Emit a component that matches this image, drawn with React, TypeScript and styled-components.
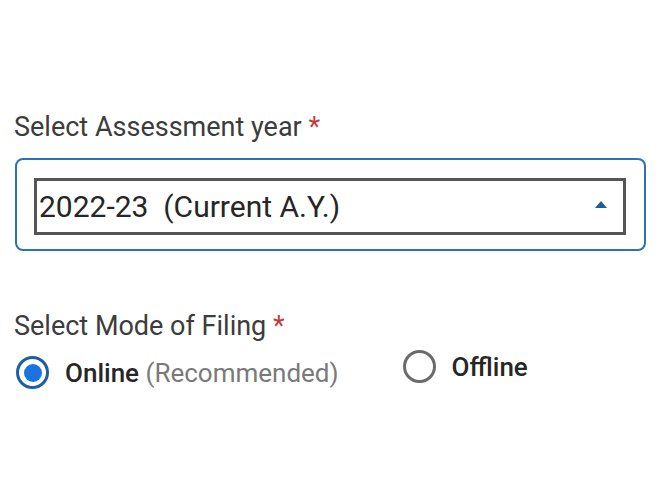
import React from "react";
import styled, { createGlobalStyle } from "styled-components";

const Global = createGlobalStyle`
  html, body { margin: 0; padding: 0; background: #ffffff; }
  body { font-family: Roboto, "Noto Sans", Arial, sans-serif; }
`;

const Page = styled.div`
  width: 660px;
  height: 495px;
  box-sizing: border-box;
  padding: 110px 14px 0 14px;
  display: flex;
  flex-direction: column;
`;

const Label = styled.div<{ $mt?: number }>`
  font-size: 27px;
  line-height: 34px;
  color: #3c3c3c;
  margin-top: ${(p) => p.$mt ?? 0}px;
  padding-left: 0;
`;

const Req = styled.span`
  color: #c6373e;
`;

const Outer = styled.div`
  margin-top: 14px;
  margin-left: 1px;
  width: 631px;
  height: 93px;
  box-sizing: border-box;
  border: 2px solid #2b73b8;
  border-radius: 8px;
  padding: 18px 18px 0 17px;
`;

const Inner = styled.div`
  height: 57px;
  box-sizing: border-box;
  border: 3px solid #555555;
  display: flex;
  align-items: center;
  justify-content: space-between;
  padding: 0 16px 0 2px;
`;

const Value = styled.span`
  font-size: 30px;
  color: #262626;
  white-space: pre;
`;

const Caret = styled.span`
  width: 0;
  height: 0;
  border-left: 6px solid transparent;
  border-right: 6px solid transparent;
  border-bottom: 7px solid #1f5c9c;
  margin-bottom: 4px;
`;

const Options = styled.div`
  display: flex;
  align-items: center;
  margin-top: 13px;
`;

const Option = styled.label<{ $ml?: number; $dy?: number }>`
  display: flex;
  align-items: center;
  gap: 16px;
  margin-left: ${(p) => p.$ml ?? 0}px;
  position: relative;
  top: ${(p) => p.$dy ?? 0}px;
`;

const Radio = styled.span<{ $on?: boolean }>`
  width: 33px;
  height: 33px;
  box-sizing: border-box;
  border-radius: 50%;
  border: 3px solid ${(p) => (p.$on ? "#1c5fa6" : "#6b6b6b")};
  display: flex;
  align-items: center;
  justify-content: center;
  &::after {
    content: "";
    display: ${(p) => (p.$on ? "block" : "none")};
    width: 18px;
    height: 18px;
    border-radius: 50%;
    background: #1a73e0;
  }
`;

const OptText = styled.span`
  font-size: 26px;
  font-weight: 500;
  color: #262626;
`;

const Hint = styled.span`
  font-weight: 400;
  color: #7a7a7a;
`;

export default function App() {
  return (
    <>
      <Global />
      <Page>
        <Label>
          Select Assessment year <Req>*</Req>
        </Label>
        <Outer>
          <Inner>
            <Value>2022-23  (Current A.Y.)</Value>
            <Caret />
          </Inner>
        </Outer>
        <Label $mt={58}>
          Select Mode of Filing <Req>*</Req>
        </Label>
        <Options>
          <Option $ml={2}>
            <Radio $on />
            <OptText>
              Online <Hint>(Recommended)</Hint>
            </OptText>
          </Option>
          <Option $ml={64} $dy={-6}>
            <Radio />
            <OptText>Offline</OptText>
          </Option>
        </Options>
      </Page>
    </>
  );
}
